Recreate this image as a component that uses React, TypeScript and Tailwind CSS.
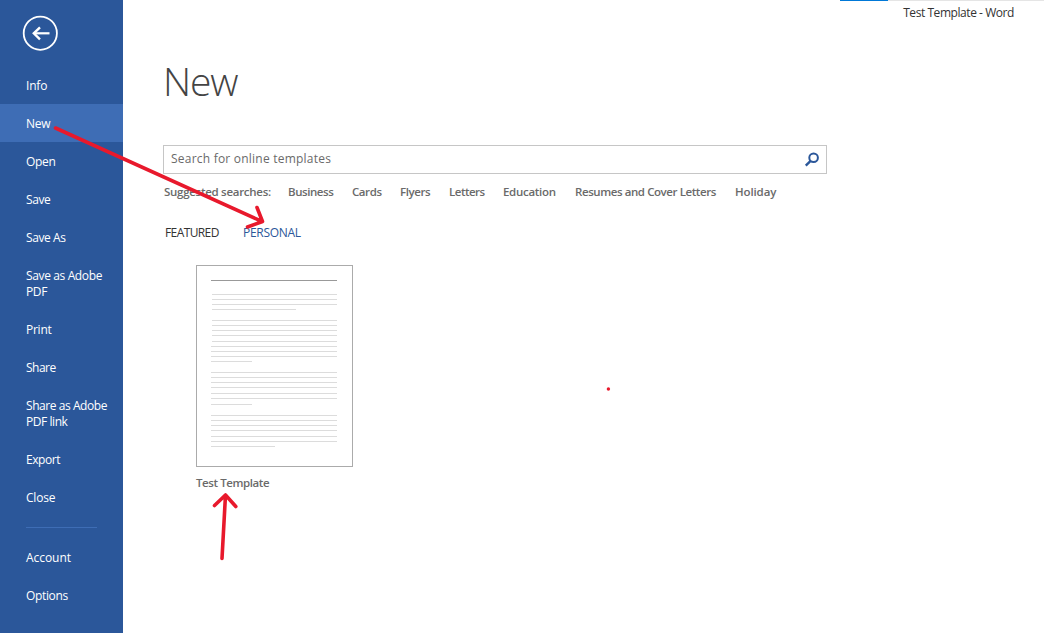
import React from "react";

type Item = { label: string; active?: boolean; tracking: string };

const mainItems: Item[] = [
  { label: "Info", tracking: "tracking-[-0.2px]" },
  { label: "New", active: true, tracking: "tracking-[-0.3px]" },
  { label: "Open", tracking: "tracking-[-0.3px]" },
  { label: "Save", tracking: "tracking-[-0.4px]" },
  { label: "Save As", tracking: "tracking-[-0.4px]" },
  { label: "Save as Adobe PDF", tracking: "tracking-[-0.37px]" },
  { label: "Print", tracking: "tracking-[-0.25px]" },
  { label: "Share", tracking: "tracking-[-0.5px]" },
  { label: "Share as Adobe PDF link", tracking: "tracking-[-0.44px]" },
  { label: "Export", tracking: "tracking-[-0.45px]" },
  { label: "Close", tracking: "tracking-[-0.2px]" },
];

const footerItems: Item[] = [
  { label: "Account", tracking: "tracking-[-0.05px]" },
  { label: "Options", tracking: "tracking-[-0.35px]" },
];

const searches = [
  { label: "Business", layout: "w-[64px] tracking-[-0.44px]" },
  { label: "Cards", layout: "w-[48px] tracking-[-0.42px]" },
  { label: "Flyers", layout: "w-[49px] tracking-[-0.4px]" },
  { label: "Letters", layout: "w-[54px] tracking-[-0.5px]" },
  { label: "Education", layout: "w-[72px] tracking-[-0.3px]" },
  { label: "Resumes and Cover Letters", layout: "w-[160px] tracking-[-0.42px]" },
  { label: "Holiday", layout: "w-[60px] tracking-[-0.12px]" },
];

const lines = [
  "mt-[13px] ml-px w-[125px]",
  "mt-1 ml-px w-[125px]",
  "mt-1 ml-px w-[125px]",
  "mt-1 ml-px w-[84px]",
  "mt-[10px] ml-px w-[125px]",
  "mt-1 ml-px w-[125px]",
  "mt-1 ml-px w-[125px]",
  "mt-1 ml-px w-[125px]",
  "mt-[5px] ml-px w-[125px]",
  "mt-1 w-[126px]",
  "mt-1 w-[126px]",
  "mt-1 w-[126px]",
  "mt-1 w-[41px]",
  "mt-[10px] w-[126px]",
  "mt-1 w-[126px]",
  "mt-1 w-[126px]",
  "mt-1 w-[126px]",
  "mt-[5px] w-[126px]",
  "mt-1 w-[126px]",
  "mt-[5px] w-[41px]",
  "mt-[10px] w-[126px]",
  "mt-1 w-[126px]",
  "mt-1 w-[126px]",
  "mt-1 w-[126px]",
  "mt-[5px] w-[126px]",
  "mt-1 w-[126px]",
  "mt-1 w-[64px]",
];

function NavItem({ item }: { item: Item }) {
  return (
    <a
      className={`block pt-3 pb-[10px] pr-2 pl-[26px] text-[12px] leading-4 text-white ${item.tracking} ${
        item.active ? "bg-[#3e6db5]" : ""
      }`}
    >
      {item.label}
    </a>
  );
}

function Sidebar() {
  return (
    <nav className="w-[123px] shrink-0 bg-[#2b579a]">
      <div className="h-[66px] pt-[15px] pl-[22px]">
        <svg width="37" height="37" viewBox="0 0 37 37" fill="none" stroke="white">
          <circle cx="18.3" cy="18.2" r="16.6" strokeWidth="1.8" />
          <path d="M27.5 18.3H12" strokeWidth="2.2" />
          <path d="M18 12.3L11.8 18.3L18 24.3" strokeWidth="2.4" />
        </svg>
      </div>
      {mainItems.map((item) => (
        <NavItem key={item.label} item={item} />
      ))}
      <div className="mt-[11px] mb-[10px] ml-[26px] h-px w-[71px] bg-[#3e6db5]" />
      {footerItems.map((item) => (
        <NavItem key={item.label} item={item} />
      ))}
    </nav>
  );
}

function TemplateCard() {
  return (
    <div className="mt-6 ml-[33px] w-[157px]">
      <div className="h-[202px] border border-[#ababab] pt-[14px] pl-[14px]">
        <div className="h-px w-[126px] bg-[#999999]" />
        {lines.map((line, i) => (
          <div key={i} className={`h-px bg-[#dcdcdc] ${line}`} />
        ))}
      </div>
      <div className="mt-2 text-[11.5px] leading-4 font-semibold tracking-[-0.42px] text-[#6a6a6a]">Test Template</div>
    </div>
  );
}

function Annotations() {
  return (
    <svg
      className="pointer-events-none absolute top-0 left-0"
      width="1044"
      height="633"
      viewBox="0 0 1044 633"
      fill="none"
      stroke="#e8192c"
      strokeWidth="3.6"
      strokeLinecap="round"
      strokeLinejoin="round"
    >
      <path d="M55.5 128L262 221.5M257 207.5L262.5 221.5L247.5 227" />
      <path d="M222 558.5L225.5 495M214.5 505.5L225.5 495L235.8 506.5" />
      <circle cx="608.4" cy="389" r="1.7" fill="#e8192c" stroke="none" />
    </svg>
  );
}

export default function App() {
  return (
    <div className="relative flex h-[633px] w-[1044px] overflow-hidden bg-white font-['Open_Sans','Noto_Sans',sans-serif]">
      <Sidebar />
      <div className="flex flex-1 flex-col">
        <div className="flex h-px pl-[717px]">
          <div className="w-12 bg-[#0078d7]" />
          <div className="flex-1 bg-[#e5e5e5]" />
        </div>
        <header className="flex h-6 justify-end pt-1 pr-[30px] text-[12px] leading-4 tracking-[-0.44px] text-[#333333]">
          Test Template - Word
        </header>
        <main className="pl-10">
          <h1 className="mt-[29px] h-[91px] text-[39px] leading-[54px] font-light tracking-[-1.2px] text-[#444444]">New</h1>
          <div className="flex h-[29px] w-[664px] items-center justify-between border border-[#c6c6c6] pr-[6px] pl-[7px] text-[12px] text-[#6a6a6a]">
            <span className="relative -top-px tracking-[0.22px]">Search for online templates</span>
            <svg width="16" height="16" viewBox="0 0 16 16" fill="none" stroke="#2b579a">
              <circle cx="9.6" cy="5.8" r="4.3" strokeWidth="2" />
              <path d="M6.6 8.9L1.8 13.6" strokeWidth="2.4" />
            </svg>
          </div>
          <div className="mt-[10px] flex text-[11.5px] leading-4 font-semibold whitespace-nowrap text-[#6a6a6a]">
            <span className="w-[125px] pl-px tracking-[-0.28px]">Suggested searches:</span>
            {searches.map((s) => (
              <a key={s.label} className={`shrink-0 ${s.layout}`}>
                {s.label}
              </a>
            ))}
          </div>
          <div className="mt-[25px] flex pl-[2px] text-[12px] leading-4">
            <span className="w-[78px] tracking-[-0.6px] text-[#333333]">FEATURED</span>
            <span className="tracking-[-0.3px] text-[#2b579a]">PERSONAL</span>
          </div>
          <TemplateCard />
        </main>
      </div>
      <Annotations />
    </div>
  );
}
